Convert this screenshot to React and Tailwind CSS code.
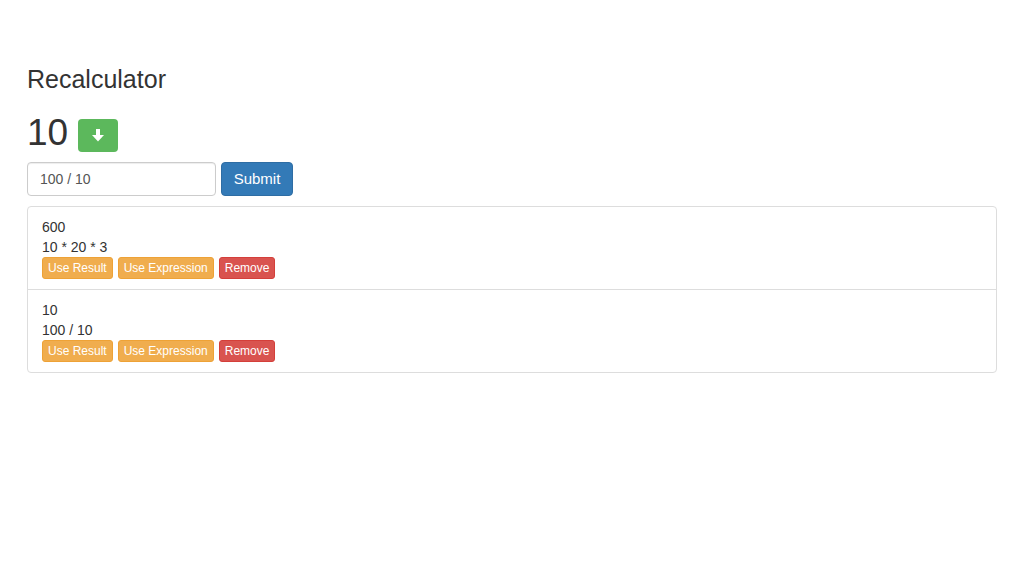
// Recalculator screen

import { useState } from "react";

const HISTORY = [
  { id: 1, result: "600", expression: "10 * 20 * 3" },
  { id: 2, result: "10", expression: "100 / 10" },
];

function ArrowDown() {
  return (
    <svg width="12" height="13" viewBox="0 0 12 13" fill="white">
      <rect x="4" y="0" width="4" height="7" />
      <polygon points="0,6 12,6 6,12.5" />
    </svg>
  );
}

export default function App() {
  const [expr, setExpr] = useState("100 / 10");

  return (
    <div className="min-h-screen w-full bg-white text-[#333] font-['Liberation_Sans',Arial,sans-serif]">
      <div className="mx-auto w-[970px] pt-[66px]">
        <h3 className="text-[25px] leading-[26px] font-medium">Recalculator</h3>

        <div className="mt-[27px] flex h-[33px] items-center gap-[10px]">
          <h1 className="mb-[6px] text-[37px] leading-none font-medium">10</h1>
          <button className="flex h-[33px] w-[40px] items-center justify-center rounded-[4px] bg-[#5cb85c]">
            <ArrowDown />
          </button>
        </div>

        <div className="mt-[10px] flex gap-[5px]">
          <input
            value={expr}
            onChange={(e) => setExpr(e.target.value)}
            className="h-[34px] w-[189px] rounded-[4px] border border-[#ccc] px-[12px] text-[14px] text-[#555] outline-none shadow-[inset_0_1px_1px_rgba(0,0,0,0.075)]"
          />
          <button className="h-[34px] w-[72px] rounded-[4px] border border-[#2e6da4] bg-[#337ab7] text-[15px] text-white">
            Submit
          </button>
        </div>

        <ul className="mt-[10px] rounded-[4px] border border-[#ddd]">
          {HISTORY.map((item, i) => (
            <li
              key={item.id}
              className={`px-[14px] py-[10px] text-[14px] leading-[20px] ${i > 0 ? "border-t border-[#ddd]" : ""}`}
            >
              <div>{item.result}</div>
              <div>{item.expression}</div>
              <div className="flex gap-[5px] text-[12px] leading-[18px] text-white">
                <button className="rounded-[3px] border border-[#eea236] bg-[#f0ad4e] px-[5px] py-[1px]">Use Result</button>
                <button className="rounded-[3px] border border-[#eea236] bg-[#f0ad4e] px-[5px] py-[1px]">Use Expression</button>
                <button className="rounded-[3px] border border-[#d43f3a] bg-[#d9534f] px-[5px] py-[1px]">Remove</button>
              </div>
            </li>
          ))}
        </ul>
      </div>
    </div>
  );
}
